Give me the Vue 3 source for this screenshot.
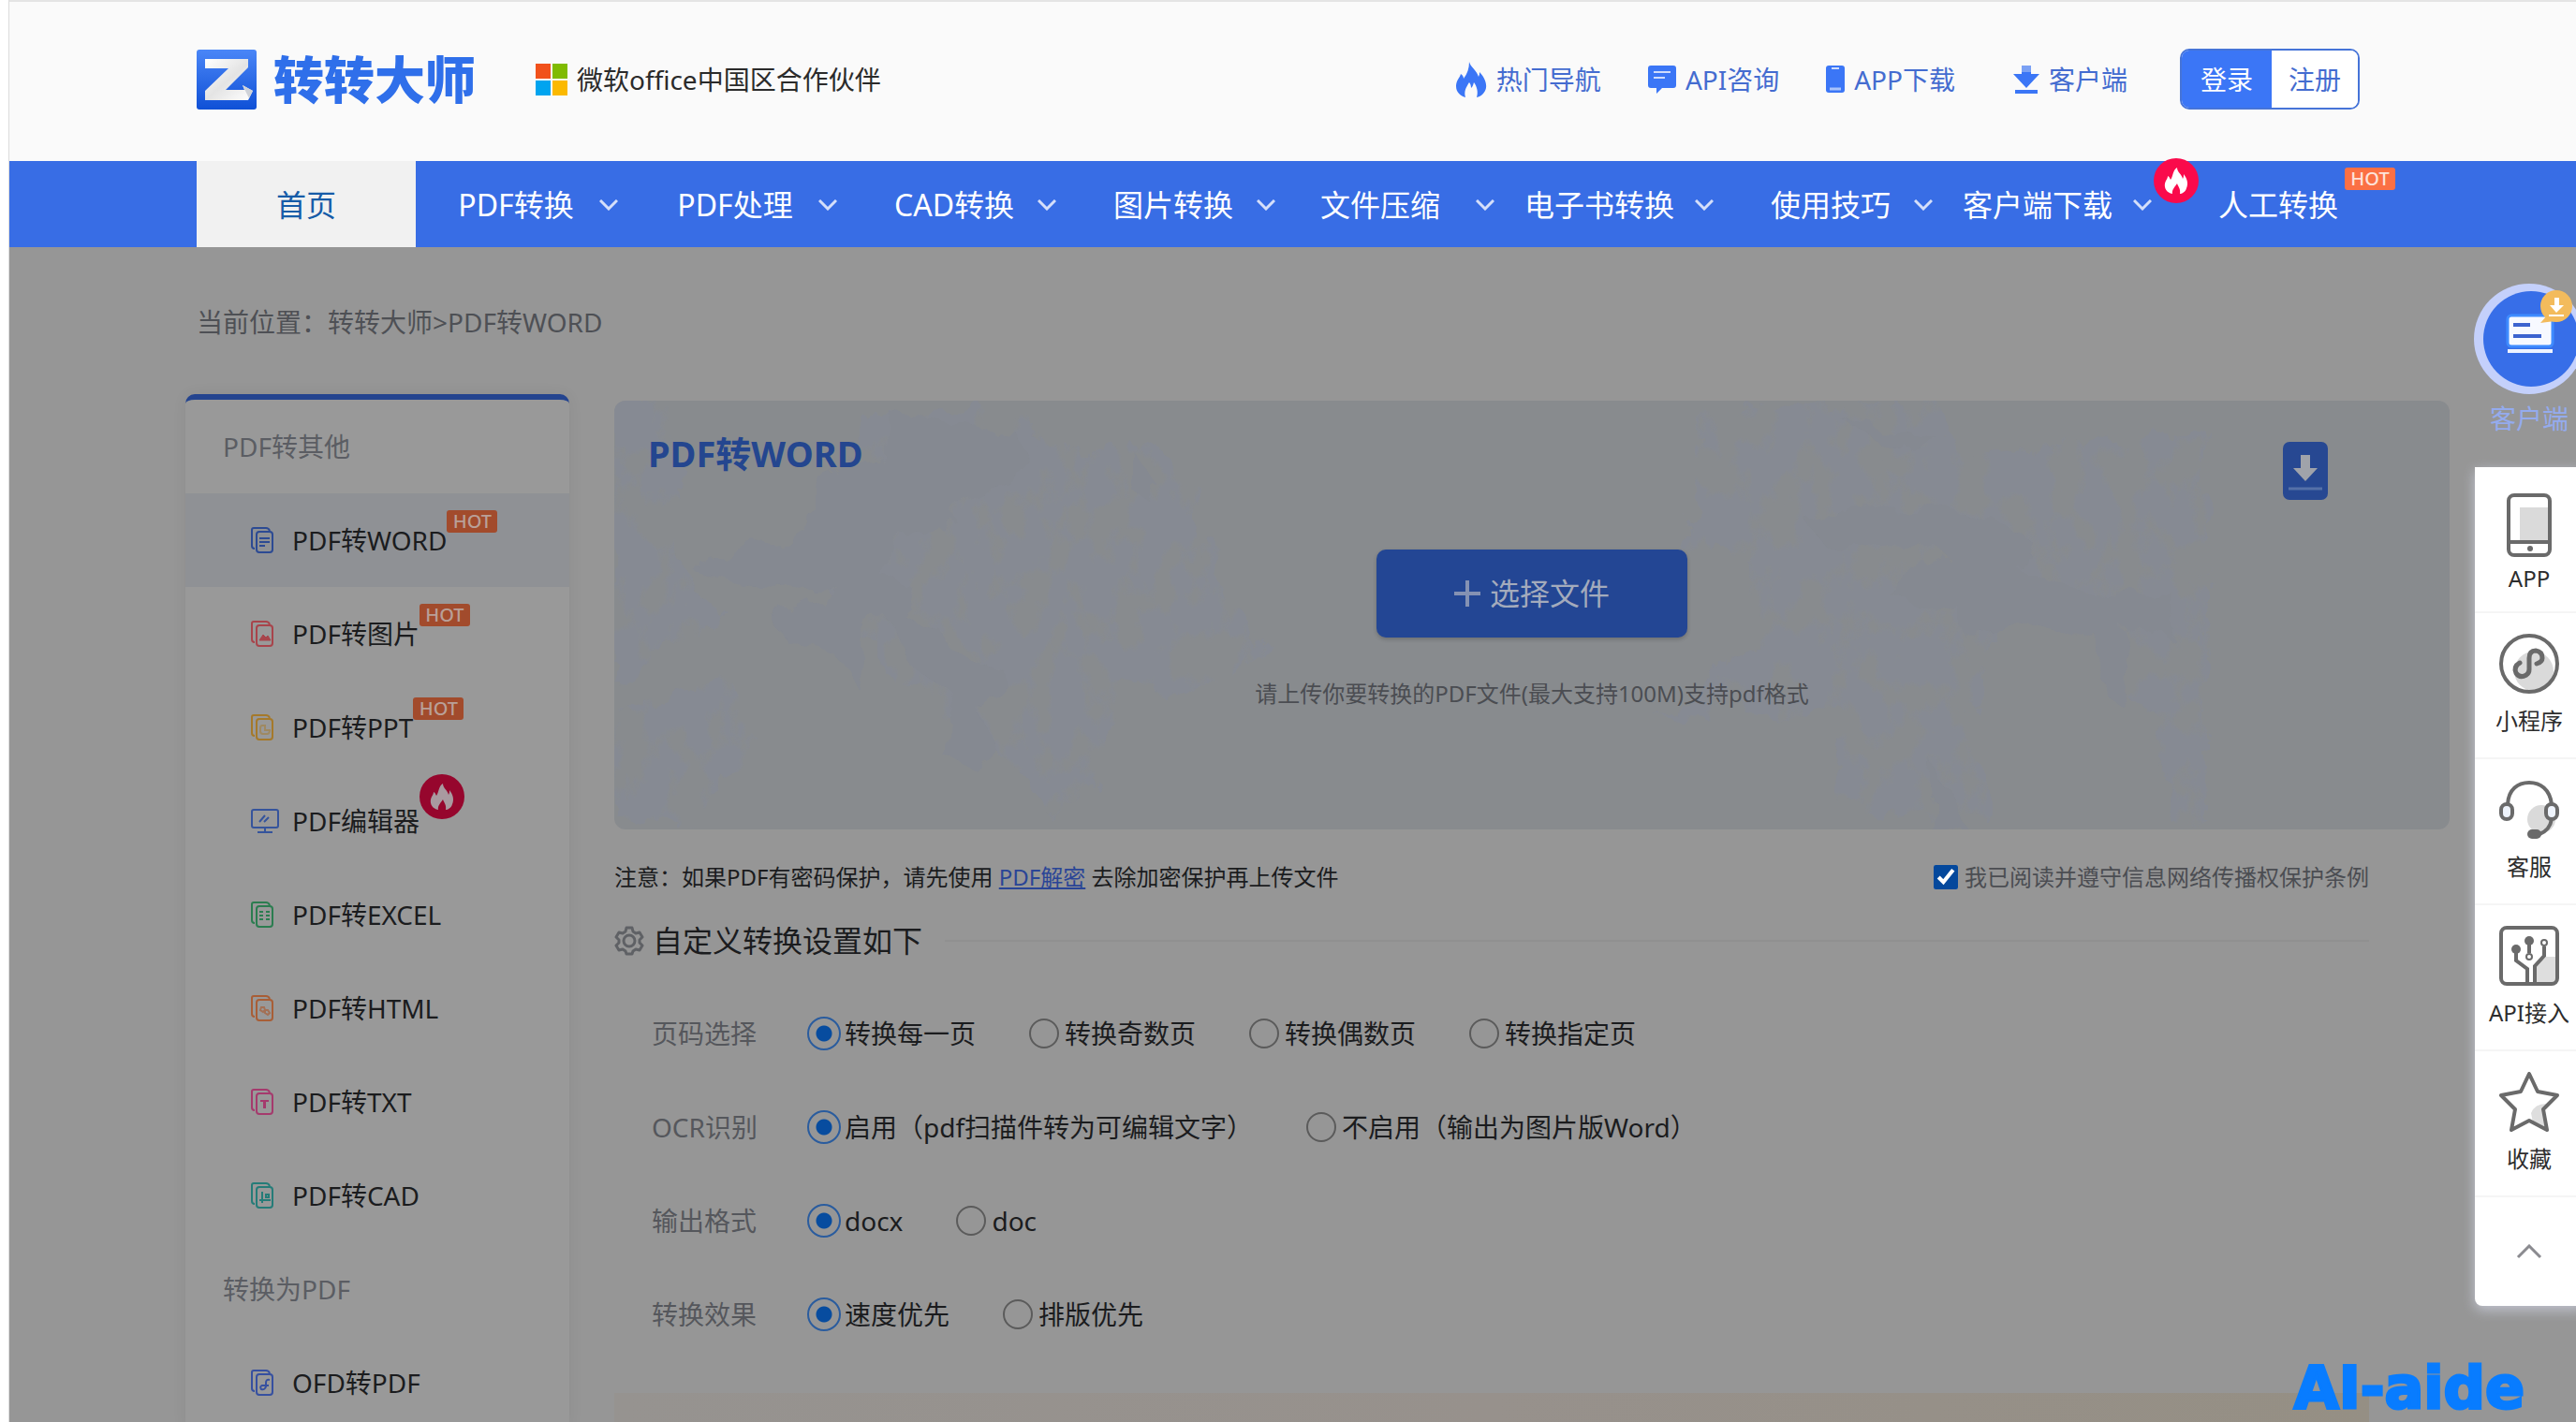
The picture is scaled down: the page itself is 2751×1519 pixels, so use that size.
<script setup>
import { ref } from 'vue'

const navItems = [
  { text: 'PDF转换', shift: 'far' },
  { text: 'PDF处理', shift: 'far' },
  { text: 'CAD转换', shift: 'far' },
  { text: '图片转换', shift: 'far' },
  { text: '文件压缩', shift: 'near' },
  { text: '电子书转换', shift: 'near' },
  { text: '使用技巧', shift: 'far' },
  { text: '客户端下载', shift: 'near', fire: true },
]

const sideItems = [
  { text: 'PDF转WORD', icon: 'word', color: '#2c4a93', hot: true, active: true },
  { text: 'PDF转图片', icon: 'image', color: '#a8444b', hot: true },
  { text: 'PDF转PPT', icon: 'ppt', color: '#a5792a', hot: true },
  { text: 'PDF编辑器', icon: 'editor', color: '#35549c', fire: true },
  { text: 'PDF转EXCEL', icon: 'excel', color: '#2b7d50' },
  { text: 'PDF转HTML', icon: 'html', color: '#a85e36' },
  { text: 'PDF转TXT', icon: 'txt', color: '#a53a6d' },
  { text: 'PDF转CAD', icon: 'cad', color: '#257c78' },
  { text: '转换为PDF', heading: true },
  { text: 'OFD转PDF', icon: 'ofd', color: '#3650a0' },
]

const settings = ref([
  { name: 'pages', label: '页码选择', value: '转换每一页', options: ['转换每一页', '转换奇数页', '转换偶数页', '转换指定页'] },
  { name: 'ocr', label: 'OCR识别', value: '启用（pdf扫描件转为可编辑文字）', options: ['启用（pdf扫描件转为可编辑文字）', '不启用（输出为图片版Word）'] },
  { name: 'format', label: '输出格式', value: 'docx', options: ['docx', 'doc'] },
  { name: 'effect', label: '转换效果', value: '速度优先', options: ['速度优先', '排版优先'] },
])

const agreed = ref(true)
</script>

<template>
  <div class="page">
    <header class="top">
      <a class="logo" href="#" aria-label="转转大师">
        <svg width="64" height="64" viewBox="0 0 64 64">
          <defs>
            <linearGradient id="lg" x1="0" y1="0" x2="0" y2="1">
              <stop offset="0" stop-color="#4a86f7" /><stop offset="1" stop-color="#0f50d6" />
            </linearGradient>
            <linearGradient id="zg" x1="0" y1="0" x2="1" y2="1">
              <stop offset="0" stop-color="#fff" /><stop offset=".5" stop-color="#e4e4e4" /><stop offset="1" stop-color="#fff" />
            </linearGradient>
          </defs>
          <rect width="64" height="64" rx="3" fill="url(#lg)" />
          <path d="M9 10H55V19L31 43H51L49 38L60 44L55 54H9V44L34 20H9Z" fill="url(#zg)" />
          <path d="M49 38L60 44L56 52Z" fill="#cfd2d8" />
        </svg>
        <span class="logo-text">转转大师</span>
      </a>
      <div class="partner">
        <svg width="34" height="34" viewBox="0 0 34 34">
          <path d="M0 0H16V16H0Z" fill="#f1511b" /><path d="M18 0H34V16H18Z" fill="#80bb01" />
          <path d="M0 18H16V34H0Z" fill="#00a4ef" /><path d="M18 18H34V34H18Z" fill="#fbb900" />
        </svg>
        <span>微软office中国区合作伙伴</span>
      </div>
      <nav class="quick">
        <a href="#">
          <svg width="34" height="38" viewBox="0 0 34 38"><path d="M15 0C16 5 23 9 25 16C26 14 26 12 26 11C31 16 34 23 33 28C32 33 28 37 23 38C25 32 23 26 20 22C19 26 18 27 17 28C17 25 16 23 15 22C12 27 9 31 11 38C5 36 1 32 1 26C1 20 5 17 6 13C8 14 9 16 9 18C13 13 15 7 15 0Z" fill="#3b76f6" /></svg>
          热门导航
        </a>
        <a href="#">
          <svg width="30" height="30" viewBox="0 0 30 30"><path d="M3 0H27A3 3 0 0 1 30 3V21A3 3 0 0 1 27 24H15L9 30V24H3A3 3 0 0 1 0 21V3A3 3 0 0 1 3 0Z" fill="#3b76f6" /><path d="M6 7H24M6 13H18" stroke="#cfdcfc" stroke-width="2" /></svg>
          API咨询
        </a>
        <a href="#">
          <svg width="20" height="29" viewBox="0 0 20 29"><rect width="20" height="29" rx="3" fill="#3b76f6" /><path d="M6 3H14" stroke="#cfdcfc" stroke-width="2" /><path d="M4 25H16" stroke="#a9c3fb" stroke-width="3" /></svg>
          APP下载
        </a>
        <a href="#" class="client">
          <svg width="28" height="30" viewBox="0 0 28 30"><path d="M9 0H19V9H28L14 24L0 9H9Z" fill="#3b76f6" /><path d="M9 0H19V7H9Z" fill="#7ba1f4" /><path d="M2 28H26" stroke="#3b76f6" stroke-width="4" /></svg>
          客户端
        </a>
      </nav>
      <div class="account">
        <button type="button" class="login">登录</button>
        <button type="button" class="register">注册</button>
      </div>
    </header>

    <nav class="menu">
      <a href="#" class="home">首页</a>
      <a v-for="item in navItems" :key="item.text" href="#" :class="item.shift">
        <span class="menu-text">{{ item.text }}</span>
        <svg width="20" height="12" viewBox="0 0 20 12"><path d="M1 1L10 10L19 1" fill="none" stroke="#d5dffa" stroke-width="3" /></svg>
        <svg v-if="item.fire" class="fire menu-fire" width="48" height="48" viewBox="0 0 48 48"><circle cx="24" cy="24" r="24" fill="#fa0a4b" /><path d="M25 10C25 15 30 17 31 22C32 20 32 19 32 17C36 22 37 27 35 32C34 36 30 38 28 38C29 33 26 30 25 27C23 30 19 34 20 38C14 37 11 32 12 27C13 23 15 22 15 19C17 20 17 21 18 23C21 19 20 13 25 10Z" fill="#fff" /></svg>
      </a>
      <a href="#" class="manual">人工转换<span class="hot menu-hot">HOT</span></a>
    </nav>

    <p class="crumbs">当前位置：<a href="#">转转大师</a>&gt;<a href="#">PDF转WORD</a></p>

    <div class="columns">
      <aside class="side">
        <h2>PDF转其他</h2>
        <template v-for="item in sideItems" :key="item.text">
          <h2 v-if="item.heading">{{ item.text }}</h2>
          <a v-else href="#" :class="{ active: item.active }">
            <span class="side-icon">
              <svg v-if="item.icon === 'editor'" width="30" height="26" viewBox="0 0 30 26" fill="none" :stroke="item.color" stroke-width="2">
                <rect x="1" y="1" width="28" height="19" rx="2" /><path d="M15 20V25M7 25H23M9 14L15 7M14 14L19 9" />
              </svg>
              <svg v-else width="24" height="28" viewBox="0 0 24 28" fill="none" :stroke="item.color" stroke-width="2">
                <path d="M4 23Q1 23 1 20V3Q1 1 3 1H16Q19 1 20 4" />
                <rect x="6" y="5" width="17" height="22" rx="3" />
                <path v-if="item.icon === 'word'" d="M9 12H20M9 16H20M9 20H15" />
                <path v-if="item.icon === 'image'" d="M9 21L13 15L16 18L18 16L21 21Z" :fill="item.color" stroke-width="1" />
                <path v-if="item.icon === 'ppt'" d="M15 12H12Q10 12 10 15V18Q10 21 13 21H17Q20 21 20 17H15Z" opacity=".5" />
                <path v-if="item.icon === 'excel'" d="M9 11H13M16 11H20M9 15H13M16 15H20M9 19H13M16 19H20" />
                <path v-if="item.icon === 'html'" d="M11 13H14L15 16L13 18L10 16ZM15 16L18 16L20 19L18 21L15 19Z" opacity=".7" />
                <path v-if="item.icon === 'txt'" d="M10 13H19M14 13V21M15 13V21" />
                <path v-if="item.icon === 'cad'" d="M12 10V22M9 19H21M16 13H19V16H16Z" />
                <path v-if="item.icon === 'ofd'" d="M20 11Q16 10 16 14V18Q15 22 11 21Q9 18 12 17H19" />
              </svg>
            </span>
            <span class="side-text">{{ item.text }}
              <span v-if="item.hot" class="hot side-hot">HOT</span>
              <svg v-if="item.fire" class="fire side-fire" width="48" height="48" viewBox="0 0 48 48"><circle cx="24" cy="24" r="24" fill="#96062d" /><path d="M25 10C25 15 30 17 31 22C32 20 32 19 32 17C36 22 37 27 35 32C34 36 30 38 28 38C29 33 26 30 25 27C23 30 19 34 20 38C14 37 11 32 12 27C13 23 15 22 15 19C17 20 17 21 18 23C21 19 20 13 25 10Z" fill="#a99aa0" /></svg>
            </span>
          </a>
        </template>
      </aside>

      <main class="main">
        <section class="upload">
          <svg class="texture" viewBox="0 0 1960 458" preserveAspectRatio="none" aria-hidden="true">
            <filter id="rough" x="-5%" y="-5%" width="110%" height="110%">
              <feTurbulence type="fractalNoise" baseFrequency=".03 .02" numOctaves="5" seed="7" result="noise" />
              <feDisplacementMap in="SourceGraphic" in2="noise" scale="50" xChannelSelector="R" yChannelSelector="G" result="moved" />
              <feColorMatrix in="noise" type="matrix" values="0 0 0 0 0  0 0 0 0 0  0 0 0 0 0  0 0 9 0 -3.6" result="holes" />
              <feComposite in="moved" in2="holes" operator="in" />
            </filter>
            <filter id="edge" x="-5%" y="-5%" width="110%" height="110%">
              <feTurbulence type="fractalNoise" baseFrequency=".03 .02" numOctaves="4" seed="3" />
              <feDisplacementMap in="SourceGraphic" scale="36" />
            </filter>
            <path filter="url(#rough)" d="M0 0H60L70 80L60 170L110 240L0 300ZM270 20L420 10L480 60L560 40L620 100L640 180L700 270L620 310L540 300L520 400L470 450L420 370L300 300L230 210L250 80ZM0 330L120 300L150 360L90 450H0ZM1170 10L1400 0L1440 60L1610 40L1640 150L1690 220L1680 340L1610 330L1560 200L1480 230L1450 330L1470 450L1320 440L1310 330L1120 340L1210 260L1220 170L1140 160ZM1610 40H1700V450H1660Z" fill="#868a93" />
            <path filter="url(#edge)" d="M296 14L430 34L444 66L405 94L366 110L366 130L296 146L284 186L315 196L310 230L354 250L360 266L418 290L424 310L392 333L405 370L380 390L348 376L366 316L316 283L296 236L264 236L258 306L240 276L182 256L176 230L240 200L118 196L86 183L118 163L176 153L220 123L226 80L290 60Z M560 60L580 90L574 110L548 90ZM1274 130L1324 115L1410 112L1508 144L1502 183L1565 204L1671 212L1664 254L1608 240L1615 330L1594 315L1586 254L1494 233L1444 254L1438 222L1366 212L1374 194L1430 172L1410 154L1296 158ZM1316 26L1410 36L1380 58ZM1410 387L1444 458H1402Z" fill="#858991" />
          </svg>
          <h1>PDF转WORD</h1>
          <button type="button" class="download" aria-label="下载">
            <svg width="48" height="62" viewBox="0 0 48 62"><rect width="48" height="62" rx="7" fill="#274892" /><path d="M19 14H29V28H37L24 42L11 28H19Z" fill="#a0a3aa" /><path d="M6 50H42" stroke="#5570a8" stroke-width="3" /></svg>
          </button>
          <button type="button" class="choose">
            <svg width="28" height="28" viewBox="0 0 28 28"><path d="M14 0V28M0 14H28" stroke="#8592b3" stroke-width="4" /></svg>
            选择文件
          </button>
          <p class="hint">请上传你要转换的PDF文件(最大支持100M)支持pdf格式</p>
        </section>

        <div class="note">
          <p>注意：如果PDF有密码保护，请先使用 <a href="#">PDF解密</a> 去除加密保护再上传文件</p>
          <label><input v-model="agreed" type="checkbox" />我已阅读并遵守信息网络传播权保护条例</label>
        </div>

        <div class="section-title">
          <svg width="32" height="32" viewBox="0 0 32 32" fill="none" stroke="#5f6165" stroke-width="3">
            <path d="M13 2H19L20 6L23 8L27 7L30 12L27 15V18L30 21L27 26L23 25L20 27L19 30H13L12 27L9 25L5 26L2 21L5 18V15L2 12L5 7L9 8L12 6Z" stroke-linejoin="round" /><circle cx="16" cy="16" r="6" />
          </svg>
          <h2>自定义转换设置如下</h2>
          <span class="rule"></span>
        </div>

        <div class="settings">
          <div v-for="row in settings" :key="row.name" class="row" role="radiogroup" :aria-label="row.label">
            <span class="row-label">{{ row.label }}</span>
            <label v-for="opt in row.options" :key="opt">
              <input v-model="row.value" type="radio" :name="row.name" :value="opt" />{{ opt }}
            </label>
          </div>
        </div>
        <div class="promo"></div>
      </main>
    </div>

    <aside class="rail">
      <a href="#" class="rail-client">
        <svg width="118" height="118" viewBox="0 0 118 118">
          <circle cx="59" cy="59" r="59" fill="#c4d0fb" /><circle cx="61" cy="59" r="51" fill="#376ee8" />
          <rect x="36" y="34" width="48" height="33" rx="4" fill="#f7f9ff" stroke="#3f8cff" stroke-width="3" />
          <path d="M36 72H84" stroke="#eef3ff" stroke-width="4" /><path d="M42 44H60M42 56H72" stroke="#3c63cf" stroke-width="4" />
          <path d="M71 42L78 34L86 40Z" fill="#f3bb5c" /><circle cx="88" cy="24" r="17" fill="#f3bb5c" />
          <path d="M86 15H91V23H96L88 31L81 23H86ZM80 33H96V35H80Z" fill="#fff" />
        </svg>
        <span>客户端</span>
      </a>
      <div class="rail-box">
        <a href="#" class="rail-app">
          <svg width="64" height="68" viewBox="0 0 64 68" fill="none" stroke="#6a6a6a" stroke-width="4"><path d="M22 15H53V51H22Z" fill="#dadada" stroke="none" /><rect x="10" y="2" width="44" height="64" rx="6" /><path d="M10 52H54" /><circle cx="33" cy="59" r="3" fill="#6a6a6a" stroke="none" /></svg>
          <span>APP</span>
        </a>
        <a href="#">
          <svg width="64" height="64" viewBox="0 0 64 64" fill="none" stroke="#6a6a6a" stroke-width="4"><circle cx="37" cy="40" r="21" fill="#dadada" stroke="none" /><circle cx="32" cy="32" r="30" /><path d="M22 31Q15 35 18 42Q22 48 29 44Q32 42 32 38V26Q32 18 39 18Q46 19 46 26Q46 30 40 32" stroke-linecap="round" stroke-width="5" /></svg>
          <span>小程序</span>
        </a>
        <a href="#">
          <svg width="64" height="64" viewBox="0 0 64 64" fill="none" stroke="#6a6a6a" stroke-width="4"><circle cx="45" cy="42" r="15" fill="#dadada" stroke="none" /><path d="M9 26C10 10 20 3 32 3S54 10 56 26M56 42Q54 54 43 58" /><rect x="2" y="26" width="12" height="16" rx="6" fill="#eef3fb" /><rect x="50" y="26" width="12" height="16" rx="6" fill="#eef3fb" /><rect x="30" y="53" width="15" height="10" rx="5" fill="#6a6a6a" stroke="none" /></svg>
          <span>客服</span>
        </a>
        <a href="#">
          <svg width="64" height="64" viewBox="0 0 64 64" fill="none" stroke="#6a6a6a" stroke-width="4"><path d="M38 62V44L50 33H62V62Z" fill="#dedede" stroke="none" /><rect x="2" y="2" width="60" height="60" rx="6" /><path d="M30 62V46L18 37V26M38 62V43L48 32V22M32 15V29" /><circle cx="18" cy="25" r="5" fill="#6a6a6a" stroke="none" /><circle cx="32" cy="16" r="5" fill="#6a6a6a" stroke="none" /><circle cx="48" cy="18" r="3" fill="#fff" stroke-width="2" /><circle cx="32" cy="33" r="3" fill="#fff" stroke-width="2" /></svg>
          <span>API接入</span>
        </a>
        <a href="#">
          <svg width="64" height="64" viewBox="0 0 64 64" fill="none" stroke="#6a6a6a" stroke-width="4" stroke-linejoin="round"><path d="M34 44Q38 34 50 34L48 40L52 61L36 54Z" fill="#dedede" stroke="none" /><path d="M32 2L41 21L62 25L47 40L51 62L32 52L13 62L17 40L2 25L23 21Z" /></svg>
          <span>收藏</span>
        </a>
        <button type="button" aria-label="回到顶部">
          <svg width="28" height="16" viewBox="0 0 28 16"><path d="M2 14L14 2L26 14" fill="none" stroke="#8b8b90" stroke-width="3" /></svg>
        </button>
      </div>
    </aside>
    <div class="brand">AI-aide</div>
  </div>
</template>

<style>
body {
  margin: 0;
  background: #fff;
}
</style>

<style scoped>
.page {
  position: relative;
  box-sizing: border-box;
  height: 100vh;
  margin-left: 9px;
  overflow: hidden;
  border-left: 1px solid #dcdcdc;
  background: #969696;
  color: #1b1c1e;
  font-family: "Noto Sans", "Noto Sans CJK SC", sans-serif;
  font-size: 28px;
  line-height: 40px;
}
.page * {
  box-sizing: border-box;
}
a {
  color: inherit;
  text-decoration: none;
}
svg {
  display: block;
  flex: none;
}
button {
  padding: 0;
  border: 0;
  background: none;
  color: inherit;
  font: inherit;
  cursor: pointer;
}
h1,
h2,
p {
  margin: 0;
  font-weight: 400;
}

.top {
  display: flex;
  align-items: center;
  height: 172px;
  padding: 0 231px 5px 200px;
  border-top: 2px solid #e4e4e4;
  background: #fafafa;
  white-space: nowrap;
}
.logo {
  display: flex;
  align-items: center;
  gap: 18px;
}
.logo-text {
  color: #2f6fea;
  font-size: 54px;
  font-weight: 900;
}
.partner {
  display: flex;
  align-items: center;
  gap: 10px;
  margin-left: 64px;
  color: #2b2b2b;
}
.quick {
  display: flex;
  gap: 50px;
  margin-left: auto;
  color: #446cd0;
}
.quick a {
  display: flex;
  align-items: center;
  gap: 10px;
}
.quick .client {
  margin-left: 12px;
}
.account {
  display: flex;
  width: 192px;
  height: 65px;
  margin-left: 56px;
  overflow: hidden;
  border: 2px solid #4674d8;
  border-radius: 10px;
}
.login {
  flex: 1;
  background: #3b76f6;
  color: #fff;
}
.register {
  width: 92px;
  background: #fff;
  color: #446cd0;
}

.menu {
  display: grid;
  grid-template-columns: repeat(10, 1fr);
  height: 92px;
  padding: 0 201px 0 200px;
  background: #386de5;
  color: #fff;
  font-size: 32px;
  white-space: nowrap;
}
.menu a {
  position: relative;
  display: flex;
  align-items: center;
  justify-content: center;
  padding: 2px 18px 0 0;
}
.menu .far {
  padding-left: 30px;
}
.menu .near {
  padding-left: 4px;
}
.menu .home {
  padding: 2px 0 0;
  background: #f1f1f1;
  color: #175ca8;
}
.menu .manual {
  padding: 2px 0 0;
}
.menu-text {
  flex: 1;
  margin-right: 12px;
  text-align: center;
}
.hot {
  position: absolute;
  width: 54px;
  height: 24px;
  border-radius: 3px;
  font-size: 20px;
  font-weight: 500;
  line-height: 24px;
  text-align: center;
}
.fire {
  position: absolute;
}
.menu-fire {
  top: -3px;
  right: -32px;
  z-index: 1;
}
.menu-hot {
  top: 7px;
  right: -8px;
  background: #fb7044;
  color: #fde3da;
}

.crumbs {
  padding: 60px 200px 57px;
  color: #4e5055;
}
.columns {
  display: flex;
  align-items: flex-start;
  gap: 48px;
  padding: 0 135px 0 188px;
}
.side {
  flex: none;
  width: 410px;
  border-top: 6px solid #24448f;
  border-radius: 10px 10px 0 0;
  background: #999;
  box-shadow: 0 0 16px rgba(0, 0, 0, 0.06);
}
.side h2 {
  padding-left: 40px;
  color: #5b5d63;
  font-size: 28px;
  line-height: 101px;
  height: 100px;
}
.side a {
  display: flex;
  align-items: center;
  height: 100px;
  padding-left: 70px;
}
.side a.active {
  background: #8f9195;
}
.side-icon {
  width: 44px;
}
.side-text {
  position: relative;
  white-space: nowrap;
}
.side-hot {
  bottom: 28px;
  left: 100%;
  background: #a24b2c;
  color: #b9a098;
}
.side-fire {
  bottom: 22px;
  left: 100%;
}

.main {
  flex: 1;
  min-width: 0;
  padding-top: 7px;
}
.upload {
  position: relative;
  display: flex;
  flex-direction: column;
  align-items: center;
  height: 458px;
  overflow: hidden;
  border-radius: 12px;
  background: #888b8e;
}
.texture {
  position: absolute;
  inset: 0;
  width: 100%;
  height: 100%;
}
.upload h1 {
  position: relative;
  align-self: stretch;
  padding: 36px 0 0 36px;
  color: #24468f;
  font-size: 38px;
  font-weight: 700;
}
.download {
  position: absolute;
  top: 44px;
  right: 130px;
}
.choose {
  position: relative;
  display: flex;
  align-items: center;
  justify-content: center;
  gap: 10px;
  width: 332px;
  height: 94px;
  margin-top: 83px;
  border-radius: 10px;
  background: #234694;
  box-shadow: 0 2px 4px rgba(0, 0, 0, 0.2);
  color: #a3abbc;
  font-size: 32px;
}
.hint {
  position: relative;
  margin-top: 40px;
  color: #4b4d52;
  font-size: 24px;
}
.note {
  display: flex;
  justify-content: space-between;
  margin: 31px 86px 0 0;
  font-size: 24px;
}
.note a {
  color: #2a4596;
  text-decoration: underline;
}
.note label {
  display: flex;
  align-items: center;
  gap: 7px;
  color: #4b4d52;
}
.note input {
  width: 26px;
  height: 26px;
  margin: 0;
  accent-color: #04489c;
}
.section-title {
  display: flex;
  align-items: center;
  gap: 9px;
  margin: 28px 86px 29px 0;
}
.section-title h2 {
  font-size: 32px;
}
.rule {
  flex: 1;
  height: 2px;
  margin-left: 15px;
  background: #909090;
}
.row {
  display: flex;
  align-items: center;
  height: 100px;
  padding-left: 40px;
  white-space: nowrap;
}
.row-label {
  width: 166px;
  color: #55575c;
}
.row label {
  display: flex;
  align-items: center;
  margin-right: 55px;
}
.row input {
  appearance: none;
  width: 32px;
  height: 32px;
  margin: 0 6px 0 2px;
  border: 2px solid #5b5b5b;
  border-radius: 50%;
}
.row input:checked {
  width: 36px;
  height: 36px;
  margin: 0 4px 0 0;
  border-color: #2a5c9e;
  background: radial-gradient(circle, #074c9f 0 8px, transparent 9px);
}
.promo {
  height: 60px;
  margin: 34px 86px 0 0;
  background: linear-gradient(90deg, #969390, #97918c 50%, #958f84);
}

.rail {
  position: absolute;
  top: 303px;
  right: -8px;
  width: 116px;
}
.rail-client {
  display: flex;
  flex-direction: column;
  align-items: center;
  gap: 6px;
  height: 196px;
  color: #94abee;
}
.rail-box {
  border-radius: 0 0 0 8px;
  background: #fff;
  box-shadow: 0 4px 14px rgba(225, 230, 250, 0.6);
  color: #2d2d2d;
  font-size: 24px;
  line-height: 32px;
}
.rail-box a {
  display: flex;
  flex-direction: column;
  align-items: center;
  justify-content: space-between;
  height: 156px;
  padding: 22px 0 23px;
  border-bottom: 2px solid #f5f5f5;
}
.rail-box .rail-app {
  padding: 28px 0 19px;
}
.rail-box button {
  display: flex;
  align-items: center;
  justify-content: center;
  width: 100%;
  height: 116px;
}
.brand {
  position: absolute;
  right: 55px;
  bottom: 16px;
  color: #087cff;
  font-family: "DejaVu Sans", sans-serif;
  font-size: 62px;
  font-weight: 700;
  -webkit-text-stroke: 3px #087cff;
}
</style>
